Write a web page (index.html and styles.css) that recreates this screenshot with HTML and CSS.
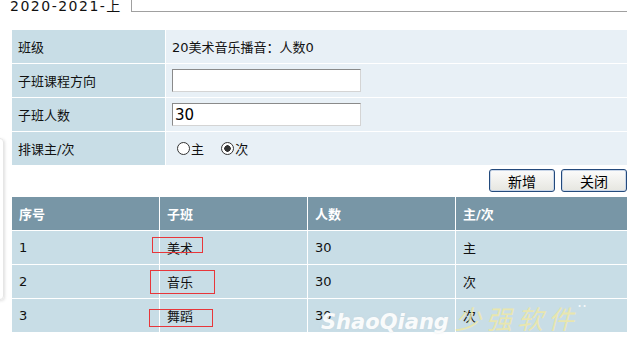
FILE: index.html
```html
<!DOCTYPE html>
<html lang="zh-CN">
<head>
    <meta charset="UTF-8">
    <title>子班设置</title>
    <link rel="stylesheet" href="styles.css">
</head>
<body>
    <div class="side-card"></div>

    <div class="term-bar">
        <span class="term">2020-2021-上</span>
        <input type="text" class="term-input">
    </div>

    <div class="page">
        <!-- 子班信息 -->
        <table class="form-table">
            <tr>
                <td class="label">班级</td>
                <td class="value">20美术音乐播音：人数0</td>
            </tr>
            <tr>
                <td class="label">子班课程方向</td>
                <td class="value"><input type="text" class="field"></td>
            </tr>
            <tr>
                <td class="label">子班人数</td>
                <td class="value"><input type="text" class="field" value="30"></td>
            </tr>
            <tr>
                <td class="label">排课主/次</td>
                <td class="value radios">
                    <label><input type="radio" name="main">主</label>
                    <label><input type="radio" name="main" checked>次</label>
                </td>
            </tr>
        </table>

        <div class="actions">
            <button class="btn">新增</button>
            <button class="btn">关闭</button>
        </div>

        <!-- 子班列表 -->
        <table class="list-table">
            <tr class="head">
                <th class="c1">序号</th>
                <th class="c2">子班</th>
                <th class="c3">人数</th>
                <th>主/次</th>
            </tr>
            <tr>
                <td>1</td>
                <td class="marked"><span class="mark mark-1"></span>美术</td>
                <td>30</td>
                <td>主</td>
            </tr>
            <tr>
                <td>2</td>
                <td class="marked"><span class="mark mark-2"></span>音乐</td>
                <td>30</td>
                <td>次</td>
            </tr>
            <tr>
                <td>3</td>
                <td class="marked"><span class="mark mark-3"></span>舞蹈</td>
                <td>30</td>
                <td>次</td>
            </tr>
        </table>
    </div>

    <div class="watermark">
        <span class="wm-en">ShaoQiang</span>
        <span class="wm-cn">少强软件</span>
        <span class="wm-dots">··</span>
    </div>
</body>
</html>
```

FILE: styles.css
```css
body {
    margin: 0;
    padding: 0;
    background: #fff;
    color: #111;
    font-family: "DejaVu Sans", "Noto Sans CJK SC", sans-serif;
    font-size: 13px;
    overflow: hidden;
}
.term-bar {
    display: flex;
    align-items: flex-end;
    height: 13px;
    margin-top: -1px;
}
.term {
    font-size: 14px;
    letter-spacing: 1.5px;
    margin-left: 10px;
    margin-bottom: -2px;
    line-height: 16px;
    width: 121px;
}
.term-input {
    flex: 1;
    height: 30px;
    border: 1px solid #a0a0a0;
    border-right: none;
    padding: 0;
    margin: 0;
}
.page {
    padding: 17px 0 0 11px;
}
table {
    border-collapse: collapse;
    width: 617px;
}
.form-table td {
    border: 1px solid #fff;
    height: 33px;
    padding: 0 6px;
}
.form-table .label {
    width: 141px;
    background: #c8dde6;
}
.form-table .value {
    background: #e8f0f6;
}
.field {
    width: 183px;
    height: 21px;
    margin: 0;
    padding: 0 2px;
    border: 1px solid #d4d4d4;
    border-top-color: #8a8a8a;
    border-left-color: #8a8a8a;
    font-family: "DejaVu Sans", "Noto Sans CJK SC", sans-serif;
    font-size: 15px;
}
.radios label {
    display: inline-flex;
    align-items: center;
    margin-left: 5px;
    margin-right: 8px;
}
.radios input {
    appearance: none;
    margin: 0 1px 0 0;
    width: 13px;
    height: 13px;
    border: 1px solid #333;
    border-radius: 50%;
    background: #fff;
}
.radios input:checked {
    background: radial-gradient(circle, #333 0, #333 3px, #fff 3.5px);
}
.actions {
    display: flex;
    justify-content: flex-end;
    gap: 6px;
    margin: 3px 0 4px;
}
.btn {
    width: 66px;
    height: 23px;
    padding: 0;
    font-family: "DejaVu Sans", "Noto Sans CJK SC", sans-serif;
    font-size: 14px;
    color: #000;
    background: linear-gradient(#fbfbfb, #e6e6e0);
    border: 1px solid #234a7c;
    border-radius: 3px;
    box-shadow: inset 0 0 0 1px #c9d6e8;
}
.list-table th,
.list-table td {
    border: 1px solid #fff;
    height: 33px;
    padding: 0 7px;
    text-align: left;
}
.list-table th {
    background: #7896a6;
    color: #fff;
    font-weight: bold;
}
.list-table td {
    background: #c8dde6;
}
.list-table .c1,
.list-table .c2,
.list-table .c3 {
    width: 133px;
}
.marked {
    position: relative;
}
.mark {
    position: absolute;
    border: 1px solid #e8363a;
}
.mark-1 { left: -8px; top: 6px; width: 49px; height: 14px; }
.mark-2 { left: -10px; top: 5px; width: 63px; height: 22px; }
.mark-3 { left: -11px; top: 10px; width: 62px; height: 16px; }
.watermark {
    position: absolute;
    left: 321px;
    top: 305px;
    display: flex;
    align-items: baseline;
    white-space: nowrap;
    line-height: 1;
    font-style: italic;
}
.wm-en {
    font-family: "DejaVu Sans", sans-serif;
    font-weight: bold;
    font-size: 21px;
    color: rgba(255, 255, 255, 0.92);
    text-shadow: 0 0 2px rgba(200, 210, 215, 0.6);
}
.wm-cn {
    font-family: "Noto Sans CJK SC", sans-serif;
    font-size: 26px;
    letter-spacing: 5px;
    margin-left: 6px;
    color: rgba(238, 232, 165, 0.85);
}
.wm-dots {
    align-self: flex-start;
    font-style: normal;
    font-size: 16px;
    color: rgba(255, 255, 255, 0.8);
    margin-left: -2px;
    margin-top: -6px;
}
.side-card {
    position: absolute;
    left: -12px;
    top: 138px;
    width: 14px;
    height: 160px;
    border: 1px solid #e6e6e6;
    border-radius: 4px;
    box-shadow: 1px 1px 3px rgba(0, 0, 0, 0.12);
}
```
